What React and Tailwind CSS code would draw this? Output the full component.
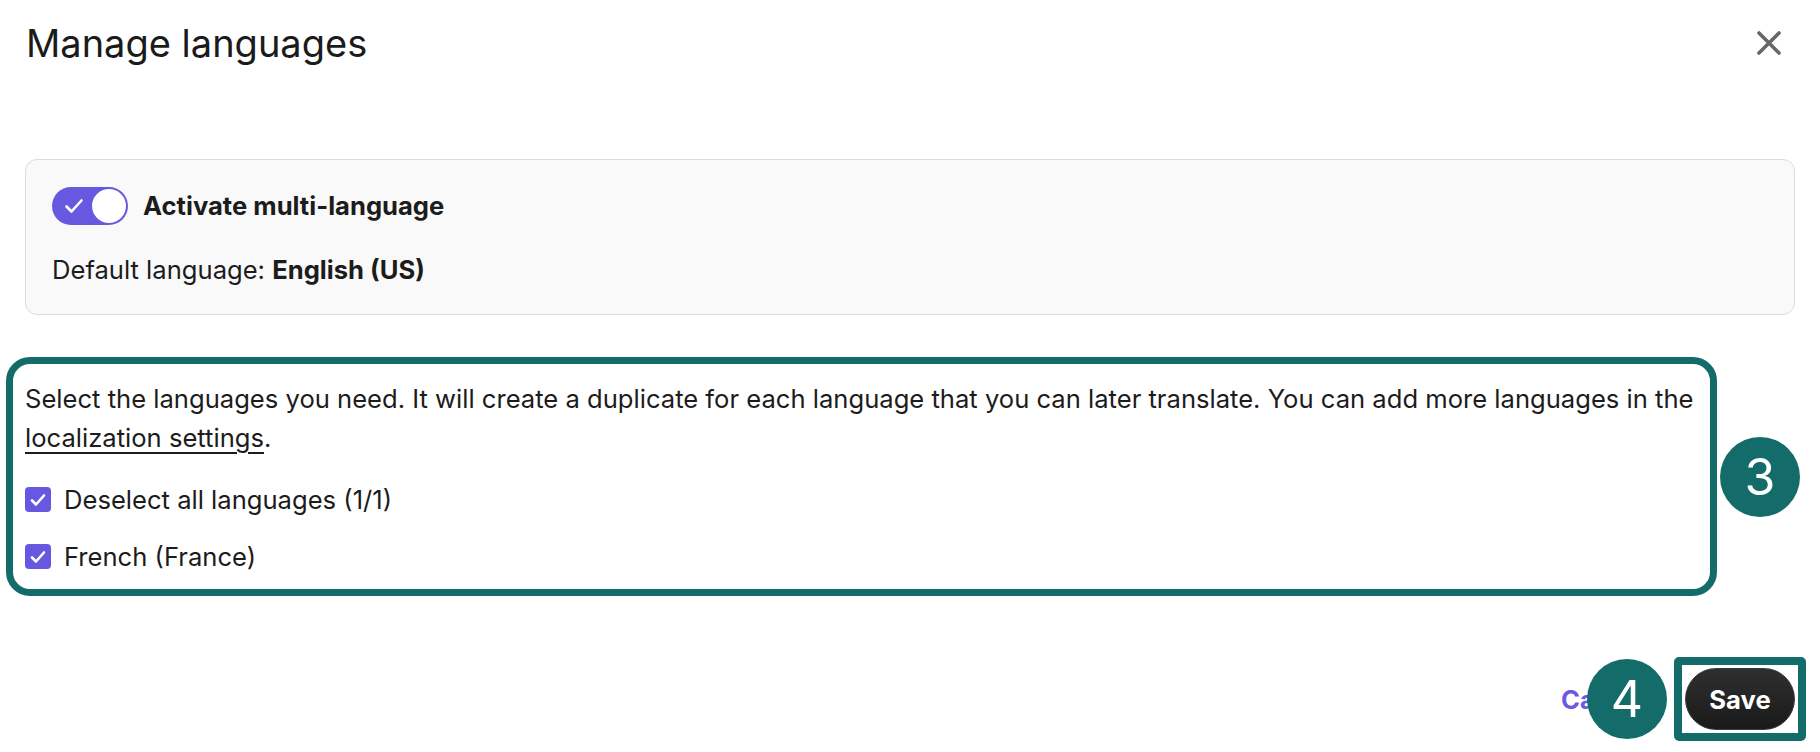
import React, { useState } from "react";

const TEAL = "#136c6a";

function Toggle({ on, onChange }) {
  return (
    <button
      type="button"
      onClick={() => onChange(!on)}
      className={`relative flex h-[38px] w-[76px] shrink-0 items-center rounded-full px-[2px] ${
        on ? "bg-[#6659e0]" : "bg-[#c9c9c9]"
      }`}
    >
      {on && (
        <svg
          className="absolute left-[12px] top-[11px]"
          width="20"
          height="16"
          viewBox="0 0 20 16"
          fill="none"
        >
          <path
            d="M2.5 8.5l5 5L17.5 2.5"
            stroke="white"
            strokeWidth="2.6"
            strokeLinecap="round"
            strokeLinejoin="round"
          />
        </svg>
      )}
      <span
        className={`h-[34px] w-[34px] rounded-full bg-white ${
          on ? "ml-auto" : ""
        }`}
      />
    </button>
  );
}

function Checkbox({ checked, onChange, label }) {
  return (
    <label className="flex cursor-pointer items-center gap-[13px]">
      <span
        onClick={() => onChange(!checked)}
        className={`flex h-[25px] w-[26px] items-center justify-center rounded-[4px] ${
          checked ? "bg-[#6659e0]" : "border-2 border-[#999] bg-white"
        }`}
      >
        {checked && (
          <svg width="16" height="14" viewBox="0 0 16 14" fill="none">
            <path
              d="M2 7.5l4 4L14 2.5"
              stroke="white"
              strokeWidth="2.6"
              strokeLinecap="round"
              strokeLinejoin="round"
            />
          </svg>
        )}
      </span>
      <span>{label}</span>
    </label>
  );
}

function Badge({ n }) {
  return (
    <div
      className="flex h-[80px] w-[80px] shrink-0 items-center justify-center rounded-full text-[50px] leading-none text-white"
      style={{ backgroundColor: TEAL }}
    >
      {n}
    </div>
  );
}

export default function App() {
  const [multi, setMulti] = useState(true);
  const [all, setAll] = useState(true);
  const [french, setFrench] = useState(true);

  return (
    <div className="relative h-[752px] w-[1820px] overflow-hidden bg-white font-['Inter','Liberation_Sans',sans-serif] text-[25.6px] leading-[39px] text-[#1c1c1c]">
      <div className="flex items-center justify-between pl-[26px] pr-[38px] pt-[19px]">
        <h1 className="text-[38px] font-normal leading-[48px] text-[#1b1b1b]">
          Manage languages
        </h1>
        <button type="button" className="flex h-[26px] w-[26px] items-center justify-center">
          <svg width="26" height="26" viewBox="0 0 26 26" fill="none">
            <path
              d="M3 3l20 20M23 3L3 23"
              stroke="#676767"
              strokeWidth="3.6"
              strokeLinecap="round"
            />
          </svg>
        </button>
      </div>

      <div className="mx-[25px] mt-[92px] rounded-[12px] border border-[#dcdcdc] bg-[#f9f9f9] px-[26px] pb-[25px] pt-[26px]">
        <div className="flex items-center gap-[15px]">
          <Toggle on={multi} onChange={setMulti} />
          <span className="font-bold">Activate multi-language</span>
        </div>
        <p className="mt-[25px]">
          Default language: <span className="font-bold">English (US)</span>
        </p>
      </div>

      <div className="ml-[6px] mt-[42px] flex items-center gap-[3px]">
        <div className="w-[1711px] rounded-[24px] border-[7px] border-[#136c6a] px-[12px] pb-[13px] pt-[15px]">
          <p className="whitespace-nowrap">
            Select the languages you need. It will create a duplicate for each language that you can later translate. You can add more languages in the
            <br />
            <a href="#" className="underline decoration-[1.5px] underline-offset-[5px]">
              localization settings
            </a>
            .
          </p>
          <div className="mt-[23px] flex flex-col gap-[18px]">
            <Checkbox checked={all} onChange={setAll} label="Deselect all languages (1/1)" />
            <Checkbox checked={french} onChange={setFrench} label="French (France)" />
          </div>
        </div>
        <Badge n="3" />
      </div>

      <div className="relative mt-[61px] flex items-center justify-end gap-[26px] pr-[14px]">
        <button type="button" className="font-bold text-[#6a5be2]">
          Cancel
        </button>
        <div className="absolute right-[153px] top-[2px]">
          <Badge n="4" />
        </div>
        <div className="rounded-[5px] border-[8px] border-[#136c6a] bg-white p-[3px]">
          <button
            type="button"
            className="flex h-[62px] w-[110px] items-center justify-center rounded-full border border-[#3a3a3a] bg-gradient-to-b from-[#2f2f2f] to-[#1a1a1a] font-bold text-white"
          >
            Save
          </button>
        </div>
      </div>
    </div>
  );
}
